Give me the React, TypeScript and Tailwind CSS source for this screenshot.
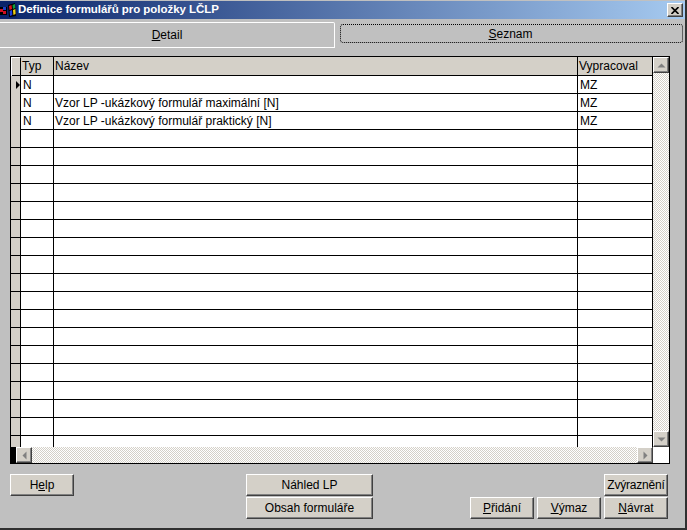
const rows = [
  { typ: 'N', nazev: '', vypracoval: 'MZ' },
  { typ: 'N', nazev: 'Vzor LP -ukázkový formulář maximální [N]', vypracoval: 'MZ' },
  { typ: 'N', nazev: 'Vzor LP -ukázkový formulář praktický [N]', vypracoval: 'MZ' },
  ...Array.from({ length: 18 }, () => ({ typ: '', nazev: '', vypracoval: '' })),
]

const bevel =
  'border border-t-white border-l-white border-r-[#404040] border-b-[#404040] shadow-[inset_-1px_-1px_0_#808080] bg-[#d4d0c8]'
const dither = 'bg-[conic-gradient(#ffffff_25%,#d4d0c8_0_50%,#ffffff_0_75%,#d4d0c8_0)] bg-[length:2px_2px]'

function Key({ children }: { children: string }) {
  return <span className="underline underline-offset-1">{children}</span>
}

function Btn({ className, children }: { className: string; children: React.ReactNode }) {
  return (
    <button className={`${bevel} flex items-center justify-center whitespace-nowrap text-[12px] text-black ${className}`}>
      <span>{children}</span>
    </button>
  )
}

function Arrow({ dir }: { dir: 'up' | 'down' | 'left' | 'right' }) {
  const points = {
    up: '0.5,6.5 4.5,2.5 8.5,6.5',
    down: '0.5,2.5 4.5,6.5 8.5,2.5',
    left: '6.5,0.5 2.5,4.5 6.5,8.5',
    right: '2.5,0.5 6.5,4.5 2.5,8.5',
  }[dir]
  return (
    <svg width="9" height="9" viewBox="0 0 9 9">
      <polygon points={points} fill="#808080" />
    </svg>
  )
}

export default function App() {
  return (
    <div className="flex h-[530px] w-[687px] flex-col overflow-hidden border-r-2 border-b-2 border-r-[#303030] border-b-[#303030] bg-[#c0c0c0] font-['Liberation_Sans',sans-serif] text-[12px] text-black">
      <div className="mt-px flex h-[18px] items-center bg-[linear-gradient(90deg,#0a246a,#a6caf0)] pr-[2px]">
        <svg width="17" height="16" viewBox="0 0 17 16" className="shrink-0">
          <rect width="17" height="16" fill="#0a246a" />
          <rect x="0" y="5" width="7" height="8" fill="#000000" />
          <rect x="0" y="7" width="3" height="3" fill="#d01020" />
          <rect x="3" y="5" width="3" height="3" fill="#2040c0" />
          <rect x="3" y="9" width="3" height="3" fill="#d01020" />
          <polygon points="8,3 15,1 16,14 9,15" fill="#000000" />
          <polygon points="9,4 11.5,3 12,7 9.5,8" fill="#e01020" />
          <polygon points="12.5,3 15,2 15.3,6 13,7" fill="#10a040" />
          <polygon points="9.6,9 12,8 12.4,13 10,14" fill="#2040e0" />
          <polygon points="13,8 15.3,7 15.6,12 13.4,13" fill="#f0d010" />
        </svg>
        <span className="ml-px text-[11.5px] font-bold tracking-[-0.05px] whitespace-nowrap text-white">Definice formulářů pro položky LČLP</span>
        <div className={`${bevel} ml-auto flex h-[14px] w-[16px] items-center justify-center`}>
          <svg width="8" height="7" viewBox="0 0 8 7">
            <path d="M0.5 0 L7.5 7 M7.5 0 L0.5 7" stroke="#000000" strokeWidth="1.6" />
          </svg>
        </div>
      </div>

      <div className="mt-[3px] flex h-[26px] items-start">
        <div className="flex h-[26px] w-[335px] items-center justify-center rounded-tr-[2px] border-t border-r border-b border-white pb-px text-[12px]">
          <span><Key>D</Key>etail</span>
        </div>
        <div className="mt-[2px] ml-[5px] flex h-[19px] w-[343px] items-center justify-center rounded-[3px] border border-dotted border-black pr-[2px]">
          <span><Key>S</Key>eznam</span>
        </div>
      </div>

      <div className="mt-[8px] ml-[10px] h-[408px] w-[660px] border border-black bg-white">
        <div className="flex h-[406px]">
          <div className="flex min-w-0 flex-1 flex-col">
            <div className="h-[390px] overflow-hidden">
              <div className="grid h-[19px] grid-cols-[10px_33px_524px_1fr] border-b border-black bg-[#d4d0c8]">
                <div className="border-r border-t border-l border-r-black border-t-white border-l-white" />
                <div className="border-r border-black pl-[1px] leading-[19px]">Typ</div>
                <div className="border-r border-black pl-[1px] leading-[19px]">Název</div>
                <div className="pl-[1px] leading-[19px]">Vypracoval</div>
              </div>
              {rows.map((row, i) => (
                <div key={i} className="grid h-[18px] grid-cols-[10px_33px_524px_1fr] border-b border-black">
                  <div className="flex items-center justify-end border-r border-black bg-[#d4d0c8]">
                    {i === 0 && (
                      <svg width="4" height="8" viewBox="0 0 4 8">
                        <polygon points="0,0 4,4 0,8" fill="#000000" />
                      </svg>
                    )}
                  </div>
                  <div className="border-r border-black pl-[2px] leading-[18px]">{row.typ}</div>
                  <div className="border-r border-black pl-[1px] leading-[18px] whitespace-nowrap">{row.nazev}</div>
                  <div className="pl-[2px] leading-[18px]">{row.vypracoval}</div>
                </div>
              ))}
            </div>
            <div className={`${dither} flex h-[16px]`}>
              <div className="w-[5px] bg-black" />
              <div className={`${bevel} flex h-[16px] w-[16px] items-center justify-center`}>
                <Arrow dir="left" />
              </div>
              <div className={`${bevel} ml-auto flex h-[16px] w-[15px] items-center justify-center border-r-0`}>
                <Arrow dir="right" />
              </div>
            </div>
          </div>
          <div className="flex w-[17px] shrink-0 flex-col">
            <div className={`${dither} flex h-[390px] flex-col justify-between border-l border-black`}>
              <div className={`${bevel} flex h-[16px] items-center justify-center`}>
                <Arrow dir="up" />
              </div>
              <div className={`${bevel} flex h-[16px] items-center justify-center`}>
                <Arrow dir="down" />
              </div>
            </div>
            <div className="h-[16px] border-l border-[#404040] bg-white" />
          </div>
        </div>
      </div>

      <div className="mt-[10px] ml-[10px] flex w-[658px] items-start">
        <Btn className="h-[22px] w-[64px]">
          H<Key>e</Key>lp
        </Btn>
        <div className="ml-[172px] flex flex-col gap-px">
          <Btn className="h-[22px] w-[127px]">Náhled LP</Btn>
          <Btn className="h-[22px] w-[127px]">Obsah formuláře</Btn>
        </div>
        <div className="ml-auto flex flex-col items-end gap-px">
          <Btn className="h-[22px] w-[64px] tracking-[-0.2px]">Zvýraznění</Btn>
          <div className="flex gap-[3px]">
            <Btn className="h-[22px] w-[64px]">
              <Key>P</Key>řidání
            </Btn>
            <Btn className="h-[22px] w-[64px]">
              <Key>V</Key>ýmaz
            </Btn>
            <Btn className="h-[22px] w-[64px]">
              <Key>N</Key>ávrat
            </Btn>
          </div>
        </div>
      </div>
    </div>
  )
}
